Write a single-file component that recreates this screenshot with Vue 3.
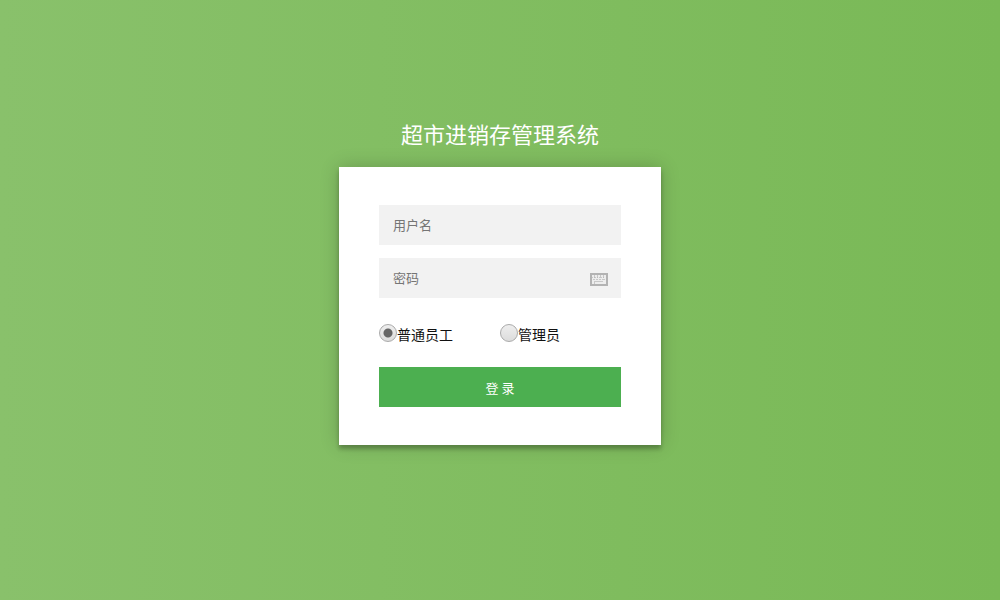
<template>
  <div class="login-page">
    <h1 class="title">超市进销存管理系统</h1>
    <form class="login-form" @submit.prevent>
      <div class="field">
        <input v-model="form.username" type="text" placeholder="用户名" aria-label="用户名" />
      </div>
      <div class="field">
        <input v-model="form.password" type="password" placeholder="密码" aria-label="密码" />
        <svg class="keyboard" viewBox="0 0 18 13" aria-hidden="true">
          <rect width="18" height="13" rx="1" fill="#b3b3b3" />
          <rect x="2" y="2" width="14" height="9" fill="#ededed" />
          <path
            d="M2 4.5h1M4 4.5h2M7 4.5h1M9 4.5h1M11 4.5h1M13 4.5h1M3 6.5h2M6 6.5h2M9 6.5h2M12 6.5h3M4.5 8v3M5 8.5h8M4.5 2v3M7.5 2v3M10.5 2v3M13.5 2v3"
            stroke="#b3b3b3"
            stroke-opacity="0.65"
            fill="none"
          />
          <rect x="1" y="1" width="16" height="11" fill="none" stroke="#b3b3b3" stroke-width="2" />
        </svg>
      </div>
      <div class="roles">
        <label v-for="role in roles" :key="role.value" class="role">
          <input v-model="form.role" type="radio" name="role" :value="role.value" />
          <span>{{ role.label }}</span>
        </label>
      </div>
      <button type="submit">登 录</button>
    </form>
  </div>
</template>

<script setup>
import { reactive } from 'vue'

const roles = [
  { value: 'staff', label: '普通员工' },
  { value: 'admin', label: '管理员' }
]

const form = reactive({
  username: '',
  password: '',
  role: 'staff'
})
</script>

<style>
body {
  margin: 0;
}
</style>

<style scoped>
.login-page {
  box-sizing: border-box;
  min-height: 100vh;
  padding: 120px 16px 40px;
  background: linear-gradient(to left, #79b956, #89c16b);
  font-family: Roboto, 'Noto Sans CJK SC', sans-serif;
}
.title {
  margin: 0 0 15px;
  color: #fff;
  font-size: 22px;
  font-weight: 400;
  line-height: 32px;
  text-align: center;
}
.login-form {
  box-sizing: border-box;
  max-width: 322px;
  margin: 0 auto;
  padding: 38px 40px;
  background: #fff;
  box-shadow: 0 0 18px rgba(0, 0, 0, 0.2), 0 4px 4px rgba(0, 0, 0, 0.24);
}
.field {
  position: relative;
  margin-bottom: 13px;
}
.field input {
  display: block;
  box-sizing: border-box;
  width: 100%;
  height: 40px;
  padding: 0 14px;
  border: 0;
  border-radius: 0;
  outline: 0;
  background: #f2f2f2;
  font-family: inherit;
  font-size: 13px;
}
.field input::placeholder {
  color: #757575;
}
.keyboard {
  position: absolute;
  top: 15px;
  right: 13px;
  width: 18px;
  height: 13px;
}
.roles {
  display: grid;
  grid-template-columns: 1fr 1fr;
  margin: 26px 0 21px;
}
.role {
  display: flex;
  align-items: flex-start;
  color: #111;
  font-size: 14px;
  line-height: 22px;
}
.role input {
  appearance: none;
  box-sizing: border-box;
  flex-shrink: 0;
  width: 18px;
  height: 18px;
  margin: 0;
  border: 1px solid #aaa;
  border-radius: 50%;
  background: linear-gradient(#eee, #dcdcdc);
}
.role input:checked {
  background: radial-gradient(circle, #666 4px, transparent 5px), linear-gradient(#eee, #dcdcdc);
}
button {
  display: block;
  width: 100%;
  height: 40px;
  padding: 0;
  border: 0;
  background: #4caf50;
  color: #fff;
  font-family: inherit;
  font-size: 13px;
  cursor: pointer;
}
</style>
